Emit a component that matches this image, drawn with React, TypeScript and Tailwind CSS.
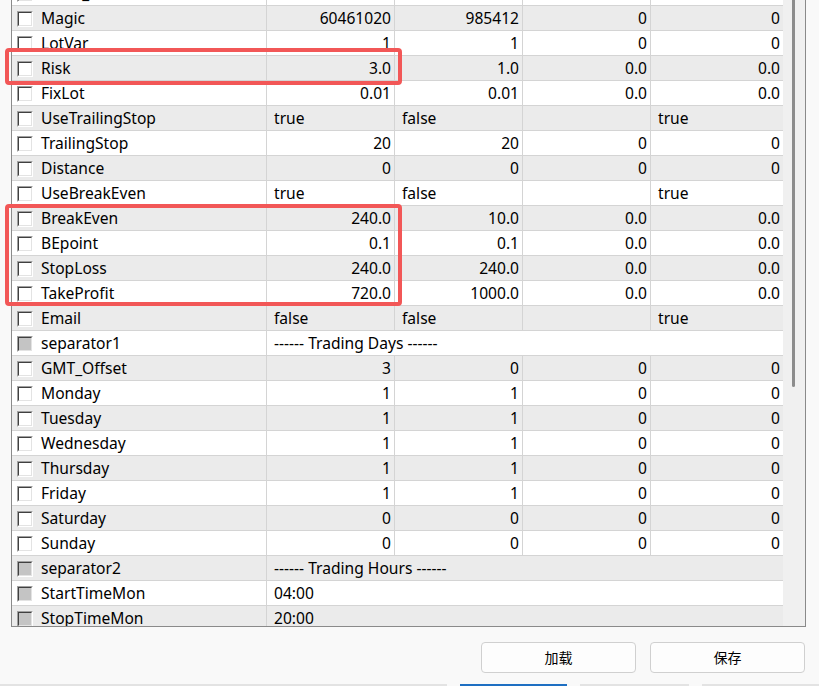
import React from "react";

type Row = {
  name: string;
  values: string[];
  kind: "num" | "text" | "wide";
  disabled?: boolean;
};

const rows: Row[] = [
  { name: "Trade_Comment", values: ["", "", "", ""], kind: "text" },
  { name: "Magic", values: ["60461020", "985412", "0", "0"], kind: "num" },
  { name: "LotVar", values: ["1", "1", "0", "0"], kind: "num" },
  { name: "Risk", values: ["3.0", "1.0", "0.0", "0.0"], kind: "num" },
  { name: "FixLot", values: ["0.01", "0.01", "0.0", "0.0"], kind: "num" },
  { name: "UseTrailingStop", values: ["true", "false", "", "true"], kind: "text" },
  { name: "TrailingStop", values: ["20", "20", "0", "0"], kind: "num" },
  { name: "Distance", values: ["0", "0", "0", "0"], kind: "num" },
  { name: "UseBreakEven", values: ["true", "false", "", "true"], kind: "text" },
  { name: "BreakEven", values: ["240.0", "10.0", "0.0", "0.0"], kind: "num" },
  { name: "BEpoint", values: ["0.1", "0.1", "0.0", "0.0"], kind: "num" },
  { name: "StopLoss", values: ["240.0", "240.0", "0.0", "0.0"], kind: "num" },
  { name: "TakeProfit", values: ["720.0", "1000.0", "0.0", "0.0"], kind: "num" },
  { name: "Email", values: ["false", "false", "", "true"], kind: "text" },
  { name: "separator1", values: ["------ Trading Days ------"], kind: "wide", disabled: true },
  { name: "GMT_Offset", values: ["3", "0", "0", "0"], kind: "num" },
  { name: "Monday", values: ["1", "1", "0", "0"], kind: "num" },
  { name: "Tuesday", values: ["1", "1", "0", "0"], kind: "num" },
  { name: "Wednesday", values: ["1", "1", "0", "0"], kind: "num" },
  { name: "Thursday", values: ["1", "1", "0", "0"], kind: "num" },
  { name: "Friday", values: ["1", "1", "0", "0"], kind: "num" },
  { name: "Saturday", values: ["0", "0", "0", "0"], kind: "num" },
  { name: "Sunday", values: ["0", "0", "0", "0"], kind: "num" },
  { name: "separator2", values: ["------ Trading Hours ------"], kind: "wide", disabled: true },
  { name: "StartTimeMon", values: ["04:00"], kind: "wide", disabled: true },
  { name: "StopTimeMon", values: ["20:00"], kind: "wide", disabled: true },
];

const Checkbox = ({ disabled }: { disabled?: boolean }) => (
  <div className="h-[16px] w-[16px] shrink-0 border-t border-l border-t-[#a0a0a0] border-l-[#a0a0a0] border-b border-r border-b-white border-r-white">
    <div
      className={`h-full w-full border-t border-l border-t-[#404040] border-l-[#404040] border-b border-r border-b-[#e3e3e3] border-r-[#e3e3e3] ${
        disabled ? "bg-[#c4c4c4]" : "bg-white"
      }`}
    />
  </div>
);

const CELL = "h-[25px] border-b border-[#d4d4d4] flex items-center overflow-hidden whitespace-nowrap pt-[1px]";

const TableRow = ({ row, index }: { row: Row; index: number }) => {
  // first row is the half scrolled-off one, so index 1 is the first gray
  const bg = index % 2 === 1 ? "bg-[#ebebeb]" : "bg-white";
  return (
    <div className={`grid grid-cols-[255px_128px_128px_128px_132px] ${bg}`}>
      <div className={`${CELL} gap-[8px] border-r pl-[5px]`}>
        <Checkbox disabled={row.disabled} />
        <span>{row.name}</span>
      </div>
      {row.kind === "wide" ? (
        <div className={`${CELL} col-span-4 pl-[7px]`}>{row.values[0]}</div>
      ) : (
        row.values.map((v, i) => (
          <div
            key={i}
            className={`${CELL} ${i < 3 ? "border-r" : ""} ${
              row.kind === "num" ? "justify-end pr-[3px]" : "pl-[7px]"
            }`}
          >
            {v}
          </div>
        ))
      )}
    </div>
  );
};

export default function App() {
  return (
    <div
      className="relative flex h-[686px] w-[819px] flex-col overflow-hidden bg-[#f9f9f9] text-[15.6px] text-black"
      style={{ fontFamily: '"Noto Sans", "Noto Sans CJK SC", sans-serif' }}
    >
      <div className="ml-[11px] mr-[13px] flex h-[627px] border-b border-l border-r border-[#8a8a8a]">
        <div className="w-[771px] overflow-hidden">
          <div className="-mt-[19px]">
            {rows.map((r, i) => (
              <TableRow key={r.name} row={r} index={i} />
            ))}
          </div>
        </div>
        <div className="flex w-[22px] bg-[#f0f0f0] pl-[9px]">
          <div className="h-[387px] w-[3px] rounded-b-sm bg-[#8c8c8c]" />
        </div>
      </div>

      <div className="flex justify-end gap-[14px] pr-[14px] pt-[15px] text-[14px]">
        <button className="h-[31px] w-[155px] rounded-[4px] border border-[#d0d0d0] bg-[#fdfdfd]">
          加载
        </button>
        <button className="h-[31px] w-[155px] rounded-[4px] border border-[#d0d0d0] bg-[#fdfdfd]">
          保存
        </button>
      </div>

      <div className="mt-auto flex h-[2px] gap-[13px]">
        <div className="w-[447px] bg-[#e3e3e3]" />
        <div className="w-[107px] bg-[#1e6fc2]" />
        <div className="w-[109px] bg-[#e3e3e3]" />
        <div className="flex-1 bg-[#e3e3e3]" />
      </div>

      {/* highlight boxes drawn over the grid */}
      <div className="pointer-events-none absolute left-[5px] top-[48px] h-[37px] w-[397px] rounded-[4px] border-[4px] border-[#f25757]" />
      <div className="pointer-events-none absolute left-[5px] top-[204px] h-[102px] w-[397px] rounded-[4px] border-[4px] border-[#f25757]" />
    </div>
  );
}
